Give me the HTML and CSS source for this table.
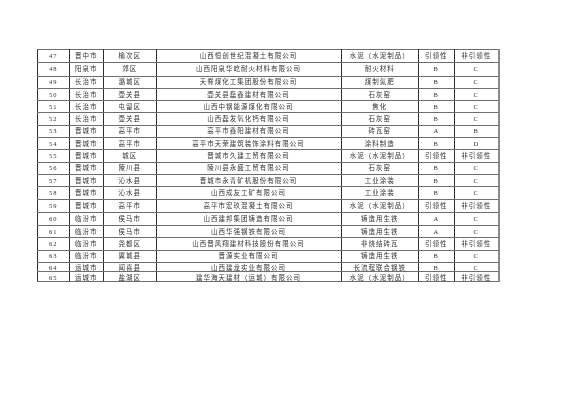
FILE: index.html
```
<!DOCTYPE html>
<html lang="zh-CN">
<head>
<meta charset="utf-8">
<title>名单</title>
<link rel="stylesheet" href="styles.css">
</head>
<body>
<div class="page">
<table class="list">
<colgroup>
<col class="c-no"><col class="c-city"><col class="c-county"><col class="c-company"><col class="c-ind"><col class="c-g1"><col class="c-g2">
</colgroup>
<tbody>
<tr class="r1"><td>47</td><td>晋中市</td><td>榆次区</td><td>山西恒创世纪混凝土有限公司</td><td>水泥（水泥制品）</td><td>引领性</td><td>非引领性</td></tr>
<tr class="r1"><td>48</td><td>阳泉市</td><td>郊区</td><td>山西阳泉华屹耐火材料有限公司</td><td>耐火材料</td><td>B</td><td>C</td></tr>
<tr><td>49</td><td>长治市</td><td>潞城区</td><td>天脊煤化工集团股份有限公司</td><td>煤制氮肥</td><td>B</td><td>C</td></tr>
<tr><td>50</td><td>长治市</td><td>壶关县</td><td>壶关县磊鑫建材有限公司</td><td>石灰窑</td><td>B</td><td>C</td></tr>
<tr><td>51</td><td>长治市</td><td>屯留区</td><td>山西中钢能源煤化有限公司</td><td>焦化</td><td>B</td><td>C</td></tr>
<tr><td>52</td><td>长治市</td><td>壶关县</td><td>山西磊发氧化钙有限公司</td><td>石灰窑</td><td>B</td><td>C</td></tr>
<tr><td>53</td><td>晋城市</td><td>高平市</td><td>高平市鑫阳建材有限公司</td><td>砖瓦窑</td><td>A</td><td>B</td></tr>
<tr><td>54</td><td>晋城市</td><td>高平市</td><td>高平市天荣建筑装饰涂料有限公司</td><td>涂料制造</td><td>B</td><td>D</td></tr>
<tr><td>55</td><td>晋城市</td><td>城区</td><td>晋城市久建工贸有限公司</td><td>水泥（水泥制品）</td><td>引领性</td><td>非引领性</td></tr>
<tr><td>56</td><td>晋城市</td><td>陵川县</td><td>陵川县永盛工贸有限公司</td><td>石灰窑</td><td>B</td><td>C</td></tr>
<tr><td>57</td><td>晋城市</td><td>沁水县</td><td>晋城市永青矿机股份有限公司</td><td>工业涂装</td><td>B</td><td>C</td></tr>
<tr><td>58</td><td>晋城市</td><td>沁水县</td><td>山西成友工矿有限公司</td><td>工业涂装</td><td>B</td><td>C</td></tr>
<tr class="r1"><td>59</td><td>晋城市</td><td>高平市</td><td>高平市宏玖混凝土有限公司</td><td>水泥（水泥制品）</td><td>引领性</td><td>非引领性</td></tr>
<tr class="r1"><td>60</td><td>临汾市</td><td>侯马市</td><td>山西建邦集团铸造有限公司</td><td>铸造用生铁</td><td>A</td><td>C</td></tr>
<tr><td>61</td><td>临汾市</td><td>侯马市</td><td>山西华强钢铁有限公司</td><td>铸造用生铁</td><td>A</td><td>C</td></tr>
<tr><td>62</td><td>临汾市</td><td>尧都区</td><td>山西晋风翔建材科技股份有限公司</td><td>非烧结砖瓦</td><td>引领性</td><td>非引领性</td></tr>
<tr><td>63</td><td>临汾市</td><td>翼城县</td><td>晋源实业有限公司</td><td>铸造用生铁</td><td>B</td><td>C</td></tr>
<tr class="r2"><td>64</td><td>运城市</td><td>闻喜县</td><td>山西建龙实业有限公司</td><td>长流程联合钢铁</td><td>B</td><td>C</td></tr>
<tr class="r2"><td>65</td><td>运城市</td><td>盐湖区</td><td>建华海天建材（运城）有限公司</td><td>水泥（水泥制品）</td><td>引领性</td><td>非引领性</td></tr>
</tbody>
</table>
</div>
</body>
</html>
```
FILE: styles.css
```
html, body {
  margin: 0;
  padding: 0;
  background: #ffffff;
}
.page {
  padding: 49px 0 0 37px;
}
.list {
  border-collapse: collapse;
  table-layout: fixed;
  width: 462px;
  font-family: "Liberation Serif", "Noto Sans CJK SC", serif;
  font-size: 6.5px;
  font-weight: 400;
  color: #333333;
  border-right: 2px solid #8a8a8a;
  filter: grayscale(1);
}
.c-no { width: 31.5px; }
.c-city { width: 34.5px; }
.c-county { width: 52.5px; }
.c-company { width: 185px; }
.c-ind { width: 77.5px; }
.c-g1 { width: 35.5px; }
.c-g2 { width: 45px; }
.list td {
  padding: 0;
  text-align: center;
  vertical-align: middle;
  white-space: nowrap;
  overflow: hidden;
  letter-spacing: 1px;
  line-height: 8px;
  border-top: 1px solid #6e6e6e;
  border-bottom: 1px solid #6e6e6e;
  border-left: 1px solid #2e2e2e;
  border-right: 1px solid #2e2e2e;
}
.list td:last-child {
  border-right: 2px solid #8a8a8a;
}
.list tr {
  height: 12.3px;
}
.list tr.r1 {
  height: 13.3px;
}
.list tr.r2 {
  height: 9.4px;
}
.list tr.r2 td {
  line-height: 7px;
  vertical-align: bottom;
}
```
